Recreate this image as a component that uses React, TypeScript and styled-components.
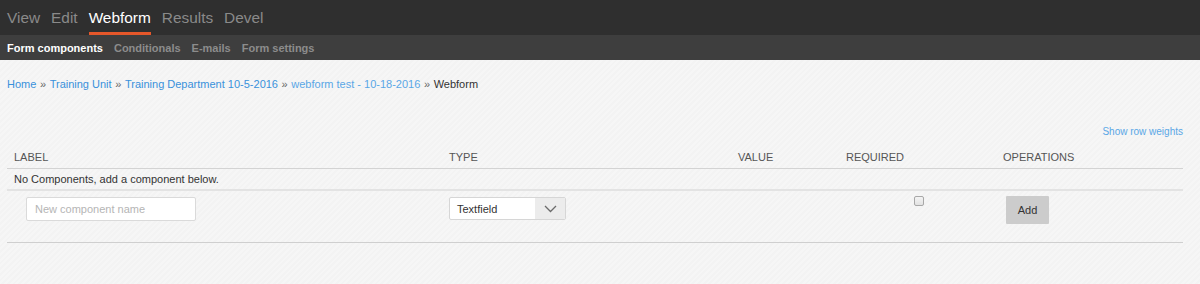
import React from 'react';
import styled, { createGlobalStyle } from 'styled-components';

const GlobalStyle = createGlobalStyle`
  html, body {
    margin: 0;
    padding: 0;
  }
  body {
    font-family: "Liberation Sans", Arial, sans-serif;
    background: #f5f5f5;
    color: #333;
    overflow: hidden;
  }
`;

const primaryTabs = [
  { label: 'View', active: false },
  { label: 'Edit', active: false },
  { label: 'Webform', active: true },
  { label: 'Results', active: false },
  { label: 'Devel', active: false },
];

const secondaryTabs = [
  { label: 'Form components', active: true },
  { label: 'Conditionals', active: false },
  { label: 'E-mails', active: false },
  { label: 'Form settings', active: false },
];

const crumbs = [
  { label: 'Home', visited: false },
  { label: 'Training Unit', visited: false },
  { label: 'Training Department 10-5-2016', visited: false },
  { label: 'webform test - 10-18-2016', visited: true },
];

export default function App() {
  return (
    <>
      <GlobalStyle />
      <Header>
        <PrimaryTabs>
          {primaryTabs.map((t) => (
            <PrimaryTab key={t.label} $active={t.active}>
              {t.label}
            </PrimaryTab>
          ))}
        </PrimaryTabs>
        <SecondaryTabs>
          {secondaryTabs.map((t) => (
            <SecondaryTab key={t.label} $active={t.active}>
              {t.label}
            </SecondaryTab>
          ))}
        </SecondaryTabs>
      </Header>
      <Page>
        <Breadcrumb>
          {crumbs.map((c) => (
            <React.Fragment key={c.label}>
              <Crumb $visited={c.visited}>{c.label}</Crumb>
              <Sep>»</Sep>
            </React.Fragment>
          ))}
          <span>Webform</span>
        </Breadcrumb>
        <WeightsToggle>Show row weights</WeightsToggle>
        <Table>
          <HeadRow>
            <Cell>Label</Cell>
            <Cell>Type</Cell>
            <Cell>Value</Cell>
            <Cell>Required</Cell>
            <Cell>Operations</Cell>
          </HeadRow>
          <EmptyRow>No Components, add a component below.</EmptyRow>
          <AddRow>
            <Cell>
              <NameInput placeholder="New component name" />
            </Cell>
            <Cell>
              <Select>
                <SelectText>Textfield</SelectText>
                <SelectArrow>
                  <svg width="13" height="8" viewBox="0 0 13 8" fill="none">
                    <path d="M1 1l5.5 5.5L12 1" stroke="#6b6b6b" strokeWidth="1.3" />
                  </svg>
                </SelectArrow>
              </Select>
            </Cell>
            <Cell />
            <CenterCell>
              <Checkbox />
            </CenterCell>
            <Cell>
              <AddButton>Add</AddButton>
            </Cell>
          </AddRow>
        </Table>
      </Page>
    </>
  );
}

const Header = styled.header`
  display: flex;
  flex-direction: column;
`;

const PrimaryTabs = styled.nav`
  display: flex;
  align-items: stretch;
  gap: 11px;
  height: 35px;
  padding: 0 7px;
  background: #2f2f2f;
`;

const PrimaryTab = styled.a<{ $active: boolean }>`
  display: flex;
  align-items: center;
  padding-top: 3px;
  font-size: 15.4px;
  color: ${({ $active }) => ($active ? '#ffffff' : '#8a8a8a')};
  border-bottom: 3px solid ${({ $active }) => ($active ? '#e5572a' : 'transparent')};
  box-sizing: border-box;
  cursor: pointer;
`;

const SecondaryTabs = styled.nav`
  display: flex;
  align-items: center;
  gap: 11px;
  height: 25px;
  padding: 0 7px;
  background: #3e3e3e;
`;

const SecondaryTab = styled.a<{ $active: boolean }>`
  font-size: 11px;
  font-weight: bold;
  color: ${({ $active }) => ($active ? '#ffffff' : '#8c8c8c')};
  cursor: pointer;
`;

const Page = styled.main`
  box-sizing: border-box;
  display: flex;
  flex-direction: column;
  height: 224px;
  padding: 17px 17px 0 7px;
  background: repeating-linear-gradient(
    -45deg,
    #f6f6f6 0px,
    #f6f6f6 2px,
    #f3f3f3 2px,
    #f3f3f3 4px
  );
`;

const Breadcrumb = styled.div`
  display: flex;
  align-items: center;
  gap: 3.6px;
  height: 14px;
  font-size: 11px;
  color: #333;
`;

const Crumb = styled.a<{ $visited: boolean }>`
  color: ${({ $visited }) => ($visited ? '#5aa7e6' : '#3991db')};
  cursor: pointer;
`;

const Sep = styled.span`
  color: #666;
`;

const WeightsToggle = styled.a`
  align-self: flex-end;
  margin-top: 35px;
  font-size: 10px;
  color: #5aa7e6;
  cursor: pointer;
`;

const Table = styled.div`
  display: flex;
  flex-direction: column;
  margin-top: 9px;
`;

const columns = '435px 289px 108px 157px 1fr';

const HeadRow = styled.div`
  display: grid;
  grid-template-columns: ${columns};
  align-items: center;
  height: 22px;
  border-bottom: 1px solid #d3d3d3;
  font-size: 11px;
  text-transform: uppercase;
  color: #555;
`;

const Cell = styled.div`
  padding: 0 7px;
`;

const CenterCell = styled(Cell)`
  display: flex;
  justify-content: center;
  align-self: start;
`;

const EmptyRow = styled.div`
  display: flex;
  align-items: center;
  height: 20px;
  padding: 0 7px;
  border-bottom: 2px solid #e3e3e3;
  font-size: 11px;
  color: #333;
`;

const AddRow = styled.div`
  display: grid;
  grid-template-columns: ${columns};
  align-items: start;
  height: 52px;
  padding-top: 5px;
  box-sizing: border-box;
  border-bottom: 1px solid #cfcfcf;
`;

const NameInput = styled.input`
  box-sizing: border-box;
  width: 170px;
  height: 24px;
  margin: 1px 0 0 12px;
  padding: 0 8px;
  border: 1px solid #dadada;
  border-radius: 2px;
  background: #fff;
  font-family: inherit;
  font-size: 11px;
  color: #333;
  outline: none;
  &::placeholder {
    color: #b5b5b5;
  }
`;

const Select = styled.div`
  box-sizing: border-box;
  display: flex;
  width: 117px;
  height: 23px;
  margin-top: 1px;
  border: 1px solid #d6d6d6;
  border-radius: 2px;
  background: #fff;
  overflow: hidden;
`;

const SelectText = styled.span`
  flex: 1;
  display: flex;
  align-items: center;
  padding-left: 7px;
  font-size: 11px;
  color: #333;
`;

const SelectArrow = styled.span`
  display: flex;
  align-items: center;
  justify-content: center;
  width: 30px;
  background: #ececec;
`;

const Checkbox = styled.span`
  box-sizing: border-box;
  display: block;
  width: 10px;
  height: 10px;
  margin-left: 2px;
  border: 1px solid #a8a8a8;
  border-radius: 2px;
  background: linear-gradient(#f4f4f4, #e2e2e2);
`;

const AddButton = styled.button`
  box-sizing: border-box;
  width: 43px;
  height: 28px;
  margin-left: 3px;
  border: none;
  border-radius: 1px;
  background: #cccccc;
  font-family: inherit;
  font-size: 11px;
  color: #333;
  cursor: pointer;
`;
